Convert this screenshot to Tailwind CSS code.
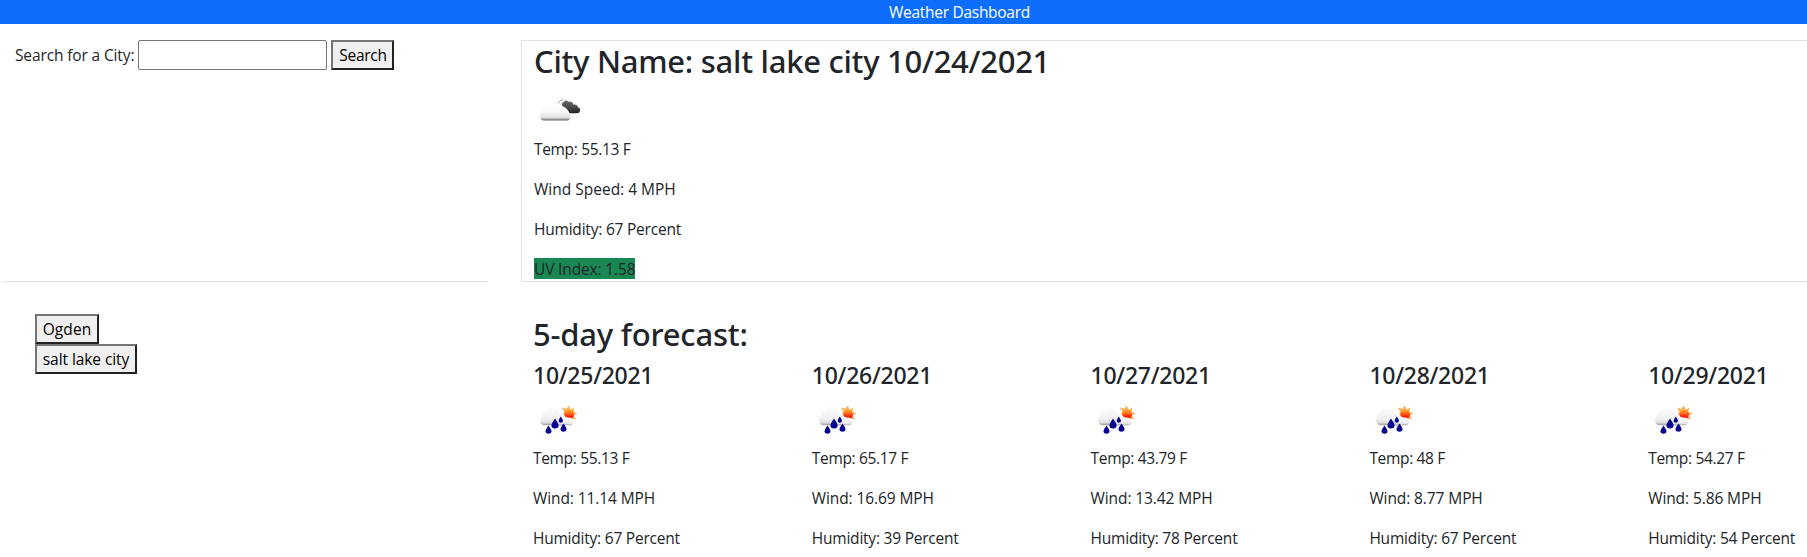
<!DOCTYPE html>
<html lang="en">
<head>
<meta charset="utf-8">
<title>Weather Dashboard</title>
<script src="https://cdn.jsdelivr.net/npm/@tailwindcss/browser@4"></script>
</head>
<body class="bg-white text-[#212529] font-['Open_Sans','Noto_Sans',sans-serif] text-[15.5px] leading-6 h-[557px] overflow-hidden">
<svg class="absolute size-0">
  <defs>
    <linearGradient id="white" x1="0" y1="0" x2="0" y2="1"><stop offset="0" stop-color="#fff"/><stop offset=".5" stop-color="#fafafa"/><stop offset=".84" stop-color="#e0e0e0"/><stop offset="1" stop-color="#666"/></linearGradient>
    <linearGradient id="dark" x1="0" y1="0" x2="0" y2="1"><stop offset="0" stop-color="#686868"/><stop offset=".6" stop-color="#444"/><stop offset="1" stop-color="#222"/></linearGradient>
    <linearGradient id="puff" x1="0" y1="0" x2="0" y2="1"><stop offset="0" stop-color="#fbfbfb"/><stop offset=".65" stop-color="#f0f0f2"/><stop offset=".85" stop-color="#dcdcde"/><stop offset="1" stop-color="#999"/></linearGradient>
    <linearGradient id="sun" x1="0" y1="0" x2="0" y2="1"><stop offset="0" stop-color="#ffb02e"/><stop offset=".4" stop-color="#ff6a1a"/><stop offset=".75" stop-color="#fb1b06"/></linearGradient>
    <symbol id="clouds" viewBox="0 -1 50 50">
      <path d="M27 16.500a4.500 4.500 0 0 1 7.500-2.700a3.700 3.700 0 0 1 5 3a3.200 3.200 0 0 1 4.500 2.500a3 3 0 0 1-.8 5.900h-7.700q-2-5-6-6.500z" fill="url(#dark)"/>
      <path d="M24 17q.5-5 5-5.400" fill="none" stroke="#888" stroke-width=".8"/>
      <path d="M27 18q0-4 4-5.200" fill="none" stroke="#eee" stroke-width="1"/>
      <path d="M10 32.500a4.300 4.300 0 0 1-2-8a5 5 0 0 1 4-6a8.200 8.200 0 0 1 14.500-.5a6.700 6.700 0 0 1 4.500 6.500a4.100 4.100 0 0 1 3 8z" fill="url(#white)"/>
    </symbol>
    <symbol id="rain" viewBox="0 -1 50 50">
      <path d="M36 8.500l1.400 4.300 4.100-2.300-1.200 4.500 4.400 1.500-4 2 2.400 4-4.200-.8-2.700 1-6-5.500 1-3-2.500-3.700 4.500 1.300z" fill="#f9b05c"/>
      <circle cx="36.200" cy="17.300" r="4.800" fill="url(#sun)"/>
      <path d="M11.500 28.300a4.600 4.600 0 0 1-3-8a5.500 5.500 0 0 1 4-6a8 8 0 0 1 13.500 1q4 2 4 7v6z" fill="url(#puff)"/>
      <path d="M26 28.300a4 4 0 0 1 2-6a4.500 4.500 0 0 1 7-1.500a3.600 3.600 0 0 1 2.500 7.500z" fill="url(#puff)"/>
      <g fill="#07078f">
        <path d="M15.500 28.500q3 4.300 3 5.500a3 2.800 0 0 1-6 0q0-1.200 3-5.500z"/>
        <path d="M22 21.500q3.600 5.300 3.600 6.800a3.600 3.300 0 0 1-7.200 0q0-1.500 3.600-6.800z"/>
        <path d="M27.800 19.500q2.200 3.200 2.200 4.200a2.200 2 0 0 1-4.400 0q0-1 2.200-4.200z"/>
        <path d="M30.500 26.500q3 4.300 3 5.500a3 2.800 0 0 1-6 0q0-1.200 3-5.500z"/>
      </g>
    </symbol>
  </defs>
</svg>

<header class="h-6 bg-[#0d6efd] text-white pl-[889px] leading-[25px] tracking-[-0.28px]">Weather Dashboard</header>

<main class="mt-4 grid grid-cols-[521px_1fr]">
  <section class="ml-[3px] mr-[33px] h-[242px] border-b border-[#dee2e6] pl-3">
    <form class="flex items-center h-[30px]">
      <label for="city" class="w-[123px] whitespace-nowrap tracking-[-0.13px]">Search for a City:</label>
      <input id="city" class="w-[189px] h-[30px] rounded-[2px] border border-[#767676]">
      <button type="button" class="ml-1 w-[63px] h-[30px] pl-px border-2 border-t-[#767676] border-l-[#767676] border-r-[#212121] border-b-[#212121] bg-[#efefef] text-black leading-[26px] tracking-[-0.27px]">Search</button>
    </form>
  </section>

  <section class="h-[242px] border border-r-0 border-[#dee2e6] pl-3 pt-px">
    <h2 class="font-['Noto_Sans'] font-medium text-[31px] leading-[38px] tracking-[-0.27px] mb-[7px]">City Name: salt lake city 10/24/2021</h2>
    <svg class="block size-[50px]"><use href="#clouds"/></svg>
    <p class="mb-4 tracking-[-0.33px]">Temp: 55.13 F</p>
    <p class="mb-4">Wind Speed: 4 MPH</p>
    <p class="mb-[17px] tracking-[-0.21px]">Humidity: 67 Percent</p>
    <p class="w-[101px] h-[21px] leading-[22px] whitespace-nowrap bg-[#198754] tracking-[-0.15px]">UV Index: 1.58</p>
  </section>

  <section class="pl-[35px] pt-8 flex flex-col items-start">
    <button type="button" class="w-16 h-[30px] border-2 border-t-[#767676] border-l-[#767676] border-r-[#212121] border-b-[#212121] bg-[#efefef] text-black leading-[26px] tracking-[0.1px]">Ogden</button>
    <button type="button" class="w-[102px] h-[30px] border-2 border-t-[#767676] border-l-[#767676] border-r-[#212121] border-b-[#212121] bg-[#efefef] text-black leading-[26px] tracking-[-0.08px]">salt lake city</button>
  </section>

  <section class="pl-3 pt-[33px]">
    <h2 class="font-['Noto_Sans'] font-medium text-[31px] leading-[38px] tracking-[-0.2px] mb-2">5-day forecast:</h2>
    <div class="grid grid-cols-[repeat(4,278.8px)_1fr]">
      <article>
        <h4 class="font-['Noto_Sans'] font-medium text-[23px] leading-[29px] tracking-[-0.27px] mb-1.5">10/25/2021</h4>
        <svg class="block size-[50px]"><use href="#rain"/></svg>
        <p class="mb-4 tracking-[-0.33px]">Temp: 55.13 F</p>
        <p class="mb-4 tracking-[-0.1px]">Wind: 11.14 MPH</p>
        <p class="tracking-[-0.22px]">Humidity: 67 Percent</p>
      </article>
      <article>
        <h4 class="font-['Noto_Sans'] font-medium text-[23px] leading-[29px] tracking-[-0.27px] mb-1.5">10/26/2021</h4>
        <svg class="block size-[50px]"><use href="#rain"/></svg>
        <p class="mb-4 tracking-[-0.33px]">Temp: 65.17 F</p>
        <p class="mb-4 tracking-[-0.1px]">Wind: 16.69 MPH</p>
        <p class="tracking-[-0.22px]">Humidity: 39 Percent</p>
      </article>
      <article>
        <h4 class="font-['Noto_Sans'] font-medium text-[23px] leading-[29px] tracking-[-0.27px] mb-1.5">10/27/2021</h4>
        <svg class="block size-[50px]"><use href="#rain"/></svg>
        <p class="mb-4 tracking-[-0.33px]">Temp: 43.79 F</p>
        <p class="mb-4 tracking-[-0.1px]">Wind: 13.42 MPH</p>
        <p class="tracking-[-0.22px]">Humidity: 78 Percent</p>
      </article>
      <article>
        <h4 class="font-['Noto_Sans'] font-medium text-[23px] leading-[29px] tracking-[-0.27px] mb-1.5">10/28/2021</h4>
        <svg class="block size-[50px]"><use href="#rain"/></svg>
        <p class="mb-4 tracking-[-0.33px]">Temp: 48 F</p>
        <p class="mb-4 tracking-[-0.1px]">Wind: 8.77 MPH</p>
        <p class="tracking-[-0.22px]">Humidity: 67 Percent</p>
      </article>
      <article>
        <h4 class="font-['Noto_Sans'] font-medium text-[23px] leading-[29px] tracking-[-0.27px] mb-1.5">10/29/2021</h4>
        <svg class="block size-[50px]"><use href="#rain"/></svg>
        <p class="mb-4 tracking-[-0.33px]">Temp: 54.27 F</p>
        <p class="mb-4 tracking-[-0.1px]">Wind: 5.86 MPH</p>
        <p class="tracking-[-0.22px]">Humidity: 54 Percent</p>
      </article>
    </div>
  </section>
</main>
</body>
</html>
